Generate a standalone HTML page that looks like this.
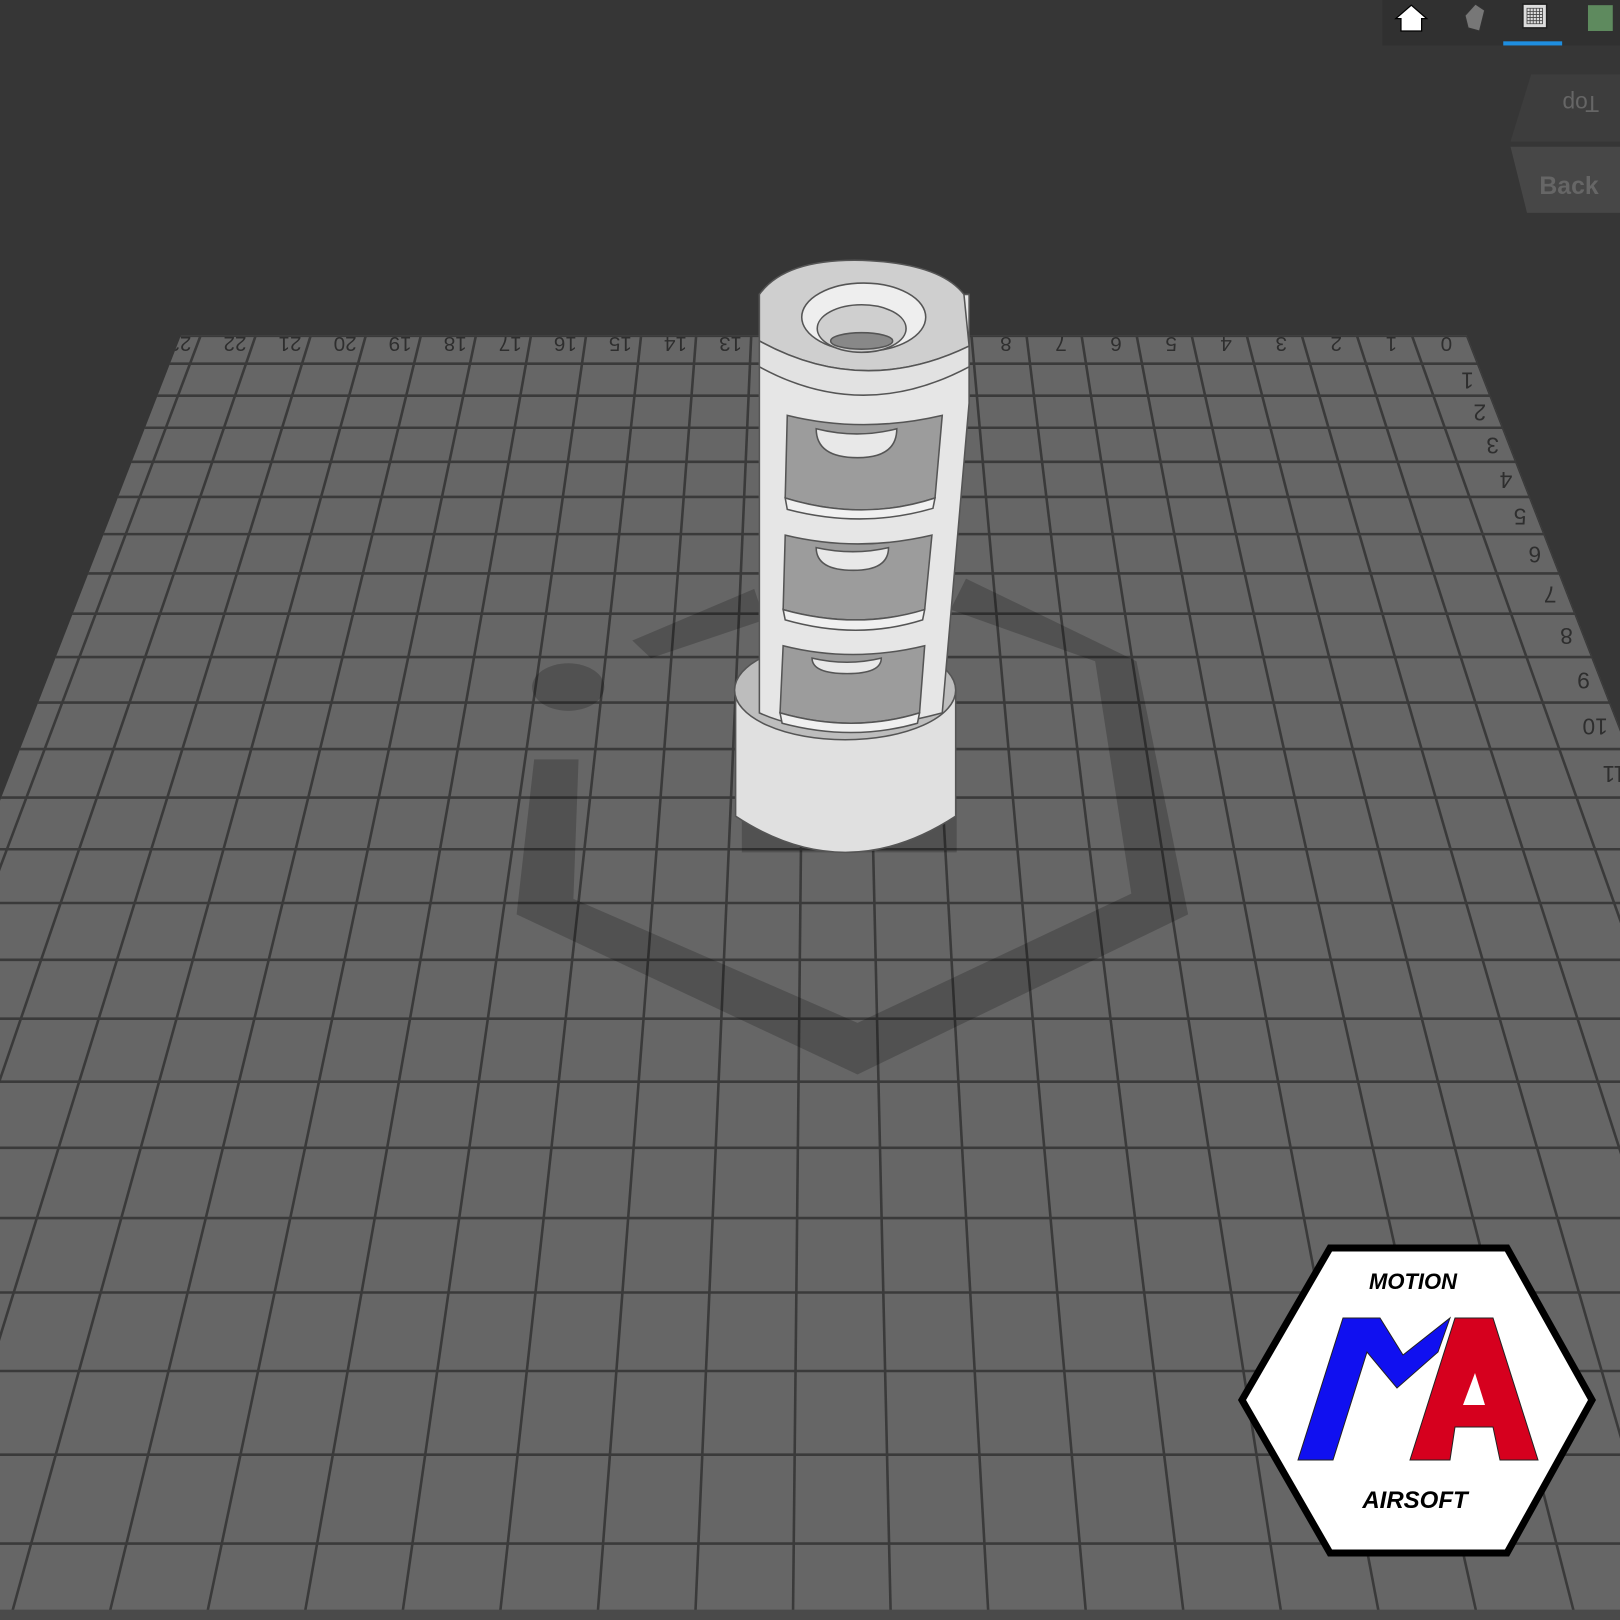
<!DOCTYPE html>
<html><head><meta charset="utf-8"><style>
html,body{margin:0;padding:0;background:#363636;}
#w{position:relative;width:1620px;height:1620px;overflow:hidden;}
svg{position:absolute;left:0;top:0;}
text{font-family:"Liberation Sans",sans-serif;}
</style></head><body><div id="w">
<svg id="s" width="1620" height="1620" viewBox="0 0 1568 1568">
<defs><clipPath id="pc"><polygon points="175,325 1420,325 1568,705 1568,1568 0,1568 0,775"/></clipPath></defs>
<rect width="1568" height="1568" fill="#363636"/>
<polygon points="175,325 1420,325 1568,705 1568,1568 0,1568 0,775" fill="#666"/>
<g clip-path="url(#pc)">
<g id="grid" stroke="#3a3a3a" stroke-width="2.5"></g>
<g id="lab" fill="#2e2e2e" font-size="20"></g>
</g>
<rect x="0" y="1558" width="1568" height="10" fill="#4a4a4a"/>
<!-- shadow -->
<g fill="rgba(0,0,0,0.2)">
<polygon points="612,620 730,570 740,600 630,637"/>
<polygon points="517,735 560,735 555,870 830,990 1095,865 1060,640 920,590 935,560 1100,640 1150,885 830,1040 500,885"/>
<ellipse cx="550" cy="665" rx="35" ry="23"/>
<rect x="718" y="770" width="208" height="55"/>
</g>
<!-- object -->
<g stroke="#555" stroke-width="1.5">
<path d="M712,668 L712,790 Q818,860 925,790 L925,668 Z" fill="#e0e0e0"/>
<ellipse cx="818" cy="668" rx="107" ry="48" fill="#bdbdbd"/>
<path d="M735,285 L735,690 Q800,720 912,690 L938,390 L938,285 Z" fill="#e6e6e6"/>
<path d="M735,285 Q760,250 835,252 Q910,255 933,285 L938,335 Q835,385 735,330 Z" fill="#cfcfcf"/>
<path d="M735,330 Q835,385 938,335 L938,355 Q835,410 735,355 Z" fill="#e2e2e2"/>
<ellipse cx="836" cy="307" rx="60" ry="33" fill="#eeeeee"/>
<ellipse cx="834" cy="318" rx="43" ry="23" fill="#cfcfcf"/>
<ellipse cx="834" cy="330" rx="30" ry="8" fill="#888"/>
<path d="M762,402 Q835,420 912,402 L905,482 Q835,505 760,482 Z" fill="#9c9c9c"/>
<path d="M790,415 Q830,425 868,415 Q868,443 830,443 Q790,443 790,415Z" fill="#e8e8e8"/>
<path d="M760,518 Q830,535 902,518 L895,590 Q830,610 758,590 Z" fill="#9c9c9c"/>
<path d="M790,530 Q826,538 860,530 Q860,552 826,552 Q790,552 790,530Z" fill="#e8e8e8"/>
<path d="M758,625 Q825,642 895,625 L890,690 Q825,710 755,690 Z" fill="#9c9c9c"/>
<path d="M786,637 Q820,645 853,637 Q853,652 820,652 Q786,652 786,637Z" fill="#e8e8e8"/>
<path d="M760,482 Q835,505 905,482 L903,492 Q835,512 762,493Z" fill="#f0f0f0"/>
<path d="M758,590 Q830,610 895,590 L893,600 Q830,620 760,600Z" fill="#f0f0f0"/>
<path d="M755,690 Q825,710 890,690 L888,700 Q825,718 757,700Z" fill="#f0f0f0"/>
</g>
<!-- toolbar -->
<rect x="1338" y="0" width="230" height="44" fill="#303030"/>
<path d="M1351,18 L1366,5 L1381,18 L1376,18 L1376,30 L1356,30 L1356,18Z" fill="#fff" stroke="#000" stroke-width="1.2"/>
<path d="M1418,15 L1428,4 L1437,10 L1432,30 L1421,27Z" fill="#777" stroke="#333"/>
<rect x="1474" y="4" width="23" height="23" fill="#ddd" stroke="#222" stroke-width="1.5"/>
<path d="M1478,8h15v15h-15z M1481,8v15 M1484,8v15 M1487,8v15 M1490,8v15 M1478,11h15 M1478,14h15 M1478,17h15 M1478,20h15" fill="none" stroke="#444" stroke-width="0.8"/>
<rect x="1455" y="40" width="57" height="4" fill="#1e8ee0"/>
<rect x="1537" y="5" width="24" height="25" fill="#5e8a5e"/>
<!-- nav cube -->
<polygon points="1482,72 1568,72 1568,137 1462,137" fill="#3d3d3d"/>
<polygon points="1462,142 1568,142 1568,206 1478,206" fill="#474747"/>
<text x="1530" y="93" font-size="22" fill="#666" transform="rotate(180 1530 93)" text-anchor="middle">Top</text>
<text x="1490" y="188" font-size="24" font-weight="bold" fill="#666">Back</text>
</svg>
<svg width="1620" height="1620" viewBox="0 0 1620 1620">
<polygon points="1242,1400 1330,1248 1507,1248 1592,1400 1507,1553 1330,1553" fill="#fff" stroke="#000" stroke-width="7"/>
<polygon points="1298,1460 1333,1460 1367,1352 1397,1388 1438,1352 1450,1318 1403,1355 1380,1318 1343,1318" fill="#1010f0" stroke="#222" stroke-width="1"/>
<polygon points="1410,1460 1455,1318 1493,1318 1538,1460 1500,1460 1493,1427 1455,1427 1450,1460" fill="#d6001e" stroke="#222" stroke-width="1"/>
<polygon points="1463,1405 1485,1405 1475,1373" fill="#fff"/>
<text x="1413" y="1289" font-size="22" font-weight="bold" font-style="italic" text-anchor="middle" fill="#000">MOTION</text>
<text x="1415" y="1508" font-size="24" font-weight="bold" font-style="italic" text-anchor="middle" fill="#000">AIRSOFT</text>
</svg>
</div>
<script>
var g=document.getElementById('grid'),L=document.getElementById('lab'),ns='http://www.w3.org/2000/svg';
function ln(a,b,c,d){var e=document.createElementNS(ns,'line');e.setAttribute('x1',a);e.setAttribute('y1',b);e.setAttribute('x2',c);e.setAttribute('y2',d);g.appendChild(e);}
var VX=797,VY=-1274;
for(var i=-8;i<=33;i++){var x=1420-53.3*i;var xb=VX+(x-VX)*(1568-VY)/(325-VY);ln(x,325,xb,1568);}
var ys=[325,352,383,414,447,481,517,555,594,636,680,725,772,822,874,929,986,1047,1111,1179,1251,1327,1408,1494];
ys.forEach(function(y){ln(0,y,1568,y);});
for(var i=0;i<=23;i++){var x=1400-53.3*i;var t=document.createElementNS(ns,'text');t.setAttribute('x',x);t.setAttribute('y',333);t.setAttribute('text-anchor','middle');t.setAttribute('transform','rotate(180 '+x+' 333)');t.setAttribute('dy','7');t.textContent=i;L.appendChild(t);}
for(var j=1;j<=11;j++){var y=(ys[j]+ys[j+1])/2;var x=1400+0.387*(y-325)+10;var t=document.createElementNS(ns,'text');t.setAttribute('x',x);t.setAttribute('y',y);t.setAttribute('transform','rotate(180 '+x+' '+y+')');t.setAttribute('dy','7');t.setAttribute('font-size','22');t.textContent=j;L.appendChild(t);}
</script>
</body></html>
